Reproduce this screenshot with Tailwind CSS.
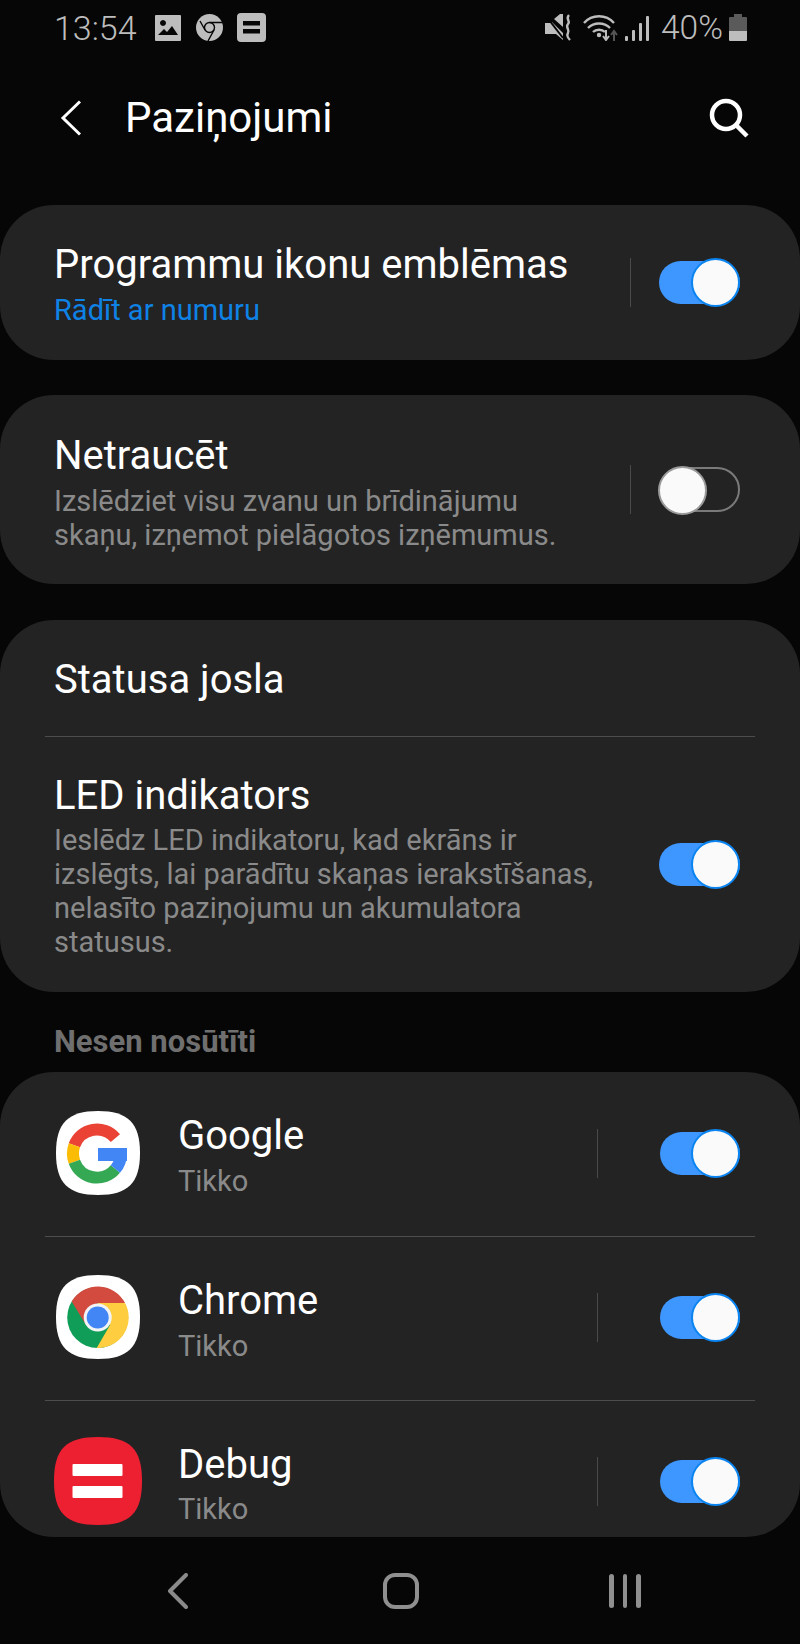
<!DOCTYPE html>
<html lang="lv">
<head>
  <meta charset="UTF-8">
  <meta name="viewport" content="width=device-width, initial-scale=1">
  <title>Paziņojumi</title>
  <script src="https://cdn.jsdelivr.net/npm/@tailwindcss/browser@4"></script>
</head>
<body class="bg-[#060606] font-[Roboto,sans-serif] text-white">
<div class="w-[800px] h-[1644px] flex flex-col overflow-hidden">

  <!-- Status bar -->
  <div class="h-[55px] flex items-center pl-[54px] text-[#bdbdbd] shrink-0">
    <span class="text-[34px] leading-none w-[101px] font-light">13:54</span>
    <svg class="w-[26px] h-[26px]" viewBox="0 0 26 26"><path fill="#bdbdbd" fill-rule="evenodd" d="M1 0h24a1 1 0 0 1 1 1v24a1 1 0 0 1-1 1H1a1 1 0 0 1-1-1V1a1 1 0 0 1 1-1zM3 20h20l-6-9-5 6-3-3zM8 5a3 3 0 1 0 .01 0z"/></svg>
    <svg class="w-[27px] h-[27px] ml-[15px]" viewBox="0 0 27 27"><circle cx="13.5" cy="13.5" r="13.5" fill="#bdbdbd"/><circle cx="13.5" cy="13.5" r="5" fill="none" stroke="#060606" stroke-width="1.4"/><path d="M13.5 8.5H26M9 16l-5-9M18 16l-6 11" stroke="#060606" stroke-width="1.4" fill="none"/></svg>
    <svg class="w-[29px] h-[29px] ml-[14px]" viewBox="0 0 29 29"><rect width="29" height="29" rx="4" fill="#bdbdbd"/><rect x="6" y="8" width="17" height="4.5" fill="#060606"/><rect x="6" y="16" width="17" height="4.5" fill="#060606"/></svg>
    <svg class="w-[27px] h-[27px] ml-[279px]" viewBox="0 0 27 27"><path fill="#bdbdbd" d="M0 9h5l2-1 11 11v7l-7-6H0zM9 5l6-5h3v13z"/><path d="M1 2l17 22" stroke="#060606" stroke-width="2"/><path d="M24 1c-4 4 2 6-1 9s2 6 0 9 0 5 2 7" stroke="#bdbdbd" stroke-width="2.4" fill="none"/></svg>
    <svg class="w-[36px] h-[27px] ml-[11px]" viewBox="0 0 36 27"><path d="M1 9c8-9 22-9 30 0M5 14c6-6 16-6 22 0M10 18c3-3 9-3 12 0" stroke="#bdbdbd" stroke-width="2.4" fill="none"/><circle cx="16" cy="21" r="2.2" fill="#bdbdbd"/><path d="M23 16v9M20 22l3 4 3-4" stroke="#bdbdbd" stroke-width="2" fill="none"/><path d="M31 27v-9M28 21l3-4 3 4" stroke="#555" stroke-width="2" fill="none"/></svg>
    <svg class="w-[24px] h-[26px] ml-[6px]" viewBox="0 0 24 26"><rect y="21" width="3" height="5" rx="1" fill="#bdbdbd"/><rect x="7" y="15" width="3" height="11" rx="1" fill="#bdbdbd"/><rect x="14" y="8" width="3" height="18" rx="1" fill="#bdbdbd"/><rect x="21" y="1" width="3" height="25" rx="1" fill="#bdbdbd"/></svg>
    <span class="text-[33.500px] leading-none ml-[12px] w-[68px] font-light">40%</span>
    <svg class="w-[18px] h-[27px]" viewBox="0 0 18 27"><path fill="#5a5a5a" d="M5 0h8v3h4a1 1 0 0 1 1 1v13H0V4a1 1 0 0 1 1-1h4z"/><path fill="#bdbdbd" d="M0 17h18v9a1 1 0 0 1-1 1H1a1 1 0 0 1-1-1z"/></svg>
  </div>

  <!-- Header -->
  <div class="h-[150px] shrink-0 flex items-center pl-[60px] pb-[24px]">
    <svg class="w-[21px] h-[36px]" viewBox="0 0 21 36"><path d="M20 1.5 3 18l17 16.500" stroke="#fff" stroke-width="3" fill="none"/></svg>
    <h1 class="text-[42px] leading-none ml-[44px] flex-1">Paziņojumi</h1>
    <svg class="w-[40px] h-[40px] mr-[51px]" viewBox="0 0 40 40"><circle cx="17" cy="17" r="14" stroke="#fff" stroke-width="4.500" fill="none"/><path d="M27 27l11 11" stroke="#fff" stroke-width="4.500"/></svg>
  </div>

  <!-- Programmu ikonu emblemas -->
  <section class="h-[155px] bg-[#232323] rounded-[54px] flex items-center pl-[54px] pr-[60px] shrink-0">
    <div class="flex-1 pt-[4px]">
      <div class="text-[40px] leading-[44px]">Programmu ikonu emblēmas</div>
      <div class="text-[29px] leading-[34px] mt-[6px] text-[#0f82e6]">Rādīt ar numuru</div>
    </div>
    <div class="w-[1px] h-[49px] bg-[#4a4a4a] mr-[28px]"></div>
    <div class="relative w-[81px] h-[43px] rounded-full bg-[#3e96ff]">
      <div class="absolute right-0 top-[-3px] w-[49px] h-[49px] rounded-full bg-[#fafafa] border-[2px] border-[#0a84f0]"></div>
    </div>
  </section>

  <!-- Netraucet -->
  <section class="h-[189px] mt-[35px] bg-[#232323] rounded-[54px] flex items-center pl-[54px] pr-[60px] shrink-0">
    <div class="flex-1 pt-[6px]">
      <div class="text-[40px] leading-[44px]">Netraucēt</div>
      <div class="text-[29px] leading-[34px] mt-[6px] text-[#8a8a8a]">Izslēdziet visu zvanu un brīdinājumu<br>skaņu, izņemot pielāgotos izņēmumus.</div>
    </div>
    <div class="w-[1px] h-[49px] bg-[#4a4a4a] mr-[28px]"></div>
    <div class="relative w-[81px] h-[45px] rounded-full border-[2px] border-[#7a7a7a]">
      <div class="absolute left-[-3px] top-[-3px] w-[49px] h-[49px] rounded-full bg-[#fafafa] border-[2px] border-[#9a9a9a]"></div>
    </div>
  </section>

  <!-- Statusa josla / LED -->
  <section class="h-[372px] mt-[36px] bg-[#232323] rounded-[54px] flex flex-col shrink-0">
    <div class="h-[116px] flex items-center pl-[54px] pt-[4px] text-[40px] leading-[44px]">Statusa josla</div>
    <div class="h-[1px] mx-[45px] bg-[#4d4d4d]"></div>
    <div class="flex-1 flex items-center pl-[54px] pr-[60px]">
      <div class="flex-1 pt-[4px]">
        <div class="text-[40px] leading-[44px]">LED indikators</div>
        <div class="text-[29px] leading-[34px] mt-[5px] text-[#8a8a8a]">Ieslēdz LED indikatoru, kad ekrāns ir<br>izslēgts, lai parādītu skaņas ierakstīšanas,<br>nelasīto paziņojumu un akumulatora<br>statusus.</div>
      </div>
      <div class="relative w-[81px] h-[43px] rounded-full bg-[#3e96ff]">
        <div class="absolute right-0 top-[-3px] w-[49px] h-[49px] rounded-full bg-[#fafafa] border-[2px] border-[#0a84f0]"></div>
      </div>
    </div>
  </section>

  <div class="h-[80px] flex items-center pl-[54px] pt-[20px] text-[31px] font-bold text-[#6f6f6f] shrink-0">Nesen nosūtīti</div>

  <!-- Nesen nosutiti -->
  <section class="h-[465px] bg-[#232323] rounded-[54px] overflow-hidden flex flex-col shrink-0">
    <div class="h-[164px] shrink-0 flex items-center pl-[56px] pr-[60px] pb-[2px]">
      <svg class="w-[84px] h-[84px]" viewBox="0 0 84 84">
        <path fill="#fff" d="M42 0C72 0 84 12 84 42S72 84 42 84 0 72 0 42 12 0 42 0z"/>
        <g fill="none" stroke-width="12">
          <path stroke="#ea4335" d="M59.400 27.100A24 24 0 0 0 18.400 34.300"/>
          <path stroke="#fbbc05" d="M18.400 34.300A24 24 0 0 0 18.400 50.700"/>
          <path stroke="#34a853" d="M18.400 50.700A24 24 0 0 0 59.400 58"/>
          <path stroke="#4285f4" d="M59.400 58A24 24 0 0 0 65 42.500"/>
        </g>
        <rect x="42" y="37" width="29" height="13" fill="#4285f4"/>
      </svg>
      <div class="flex-1 ml-[38px] pt-[6px]">
        <div class="text-[40px] leading-[44px]">Google</div>
        <div class="text-[29px] leading-[34px] mt-[6px] text-[#8a8a8a]">Tikko</div>
      </div>
      <div class="w-[1px] h-[49px] bg-[#4a4a4a] mr-[62px]"></div>
      <div class="relative w-[80px] h-[43px] rounded-full bg-[#3e96ff]">
        <div class="absolute right-0 top-[-3px] w-[49px] h-[49px] rounded-full bg-[#fafafa] border-[2px] border-[#0a84f0]"></div>
      </div>
    </div>
    <div class="h-[1px] mx-[45px] bg-[#4d4d4d] shrink-0"></div>
    <div class="h-[163px] shrink-0 flex items-center pl-[56px] pr-[60px] pb-[2px]">
      <svg class="w-[84px] h-[84px] mb-[2px]" viewBox="0 0 84 84">
        <path fill="#fff" d="M42 0C72 0 84 12 84 42S72 84 42 84 0 72 0 42 12 0 42 0z"/>
        <circle cx="41.700" cy="42.500" r="30.500" fill="#0f9d58"/>
        <path fill="#d34a3f" d="M15.700 26.500A30.500 30.500 0 0 1 69 28H41.700L30 50z"/>
        <path fill="#ffcd40" d="M69 28A30.500 30.500 0 0 1 40.700 73L54 50 41.700 28z"/>
        <circle cx="41.700" cy="42.500" r="14" fill="#f1f3f4"/>
        <circle cx="41.700" cy="42.500" r="11" fill="#4285f4"/>
      </svg>
      <div class="flex-1 ml-[38px] pt-[6px]">
        <div class="text-[40px] leading-[44px]">Chrome</div>
        <div class="text-[29px] leading-[34px] mt-[6px] text-[#8a8a8a]">Tikko</div>
      </div>
      <div class="w-[1px] h-[49px] bg-[#4a4a4a] mr-[62px]"></div>
      <div class="relative w-[80px] h-[43px] rounded-full bg-[#3e96ff]">
        <div class="absolute right-0 top-[-3px] w-[49px] h-[49px] rounded-full bg-[#fafafa] border-[2px] border-[#0a84f0]"></div>
      </div>
    </div>
    <div class="h-[1px] mx-[45px] bg-[#4d4d4d] shrink-0"></div>
    <div class="h-[163px] shrink-0 flex items-center pl-[54px] pr-[60px] pb-[2px]">
      <svg class="w-[88px] h-[88px] mb-[2px]" viewBox="0 0 88 88">
        <path fill="#ed2032" d="M44 0C76 0 88 12 88 44S76 88 44 88 0 76 0 44 12 0 44 0z"/>
        <rect x="18.500" y="27" width="50" height="12" rx="1" fill="#fff"/>
        <rect x="18.500" y="49" width="50" height="12" rx="1" fill="#fff"/>
      </svg>
      <div class="flex-1 ml-[36px] pt-[5px]">
        <div class="text-[40px] leading-[44px]">Debug</div>
        <div class="text-[29px] leading-[34px] mt-[5px] text-[#8a8a8a]">Tikko</div>
      </div>
      <div class="w-[1px] h-[49px] bg-[#4a4a4a] mr-[62px]"></div>
      <div class="relative w-[80px] h-[43px] rounded-full bg-[#3e96ff]">
        <div class="absolute right-0 top-[-3px] w-[49px] h-[49px] rounded-full bg-[#fafafa] border-[2px] border-[#0a84f0]"></div>
      </div>
    </div>
  </section>

  <!-- Nav bar -->
  <div class="flex-1 flex items-center pl-[166px]">
    <svg class="w-[22px] h-[36px]" viewBox="0 0 22 36"><path d="M20 2 4 18l16 16" stroke="#8a8a8a" stroke-width="4" stroke-linecap="round" stroke-linejoin="round" fill="none"/></svg>
    <div class="w-[36px] h-[36px] ml-[195px] rounded-[12px] border-[4px] border-[#8f8f8f]"></div>
    <div class="flex gap-[9px] ml-[190px]">
      <div class="w-[4.500px] h-[34px] rounded-full bg-[#8f8f8f]"></div>
      <div class="w-[4.500px] h-[34px] rounded-full bg-[#8f8f8f]"></div>
      <div class="w-[4.500px] h-[34px] rounded-full bg-[#8f8f8f]"></div>
    </div>
  </div>
</div>
</body>
</html>
